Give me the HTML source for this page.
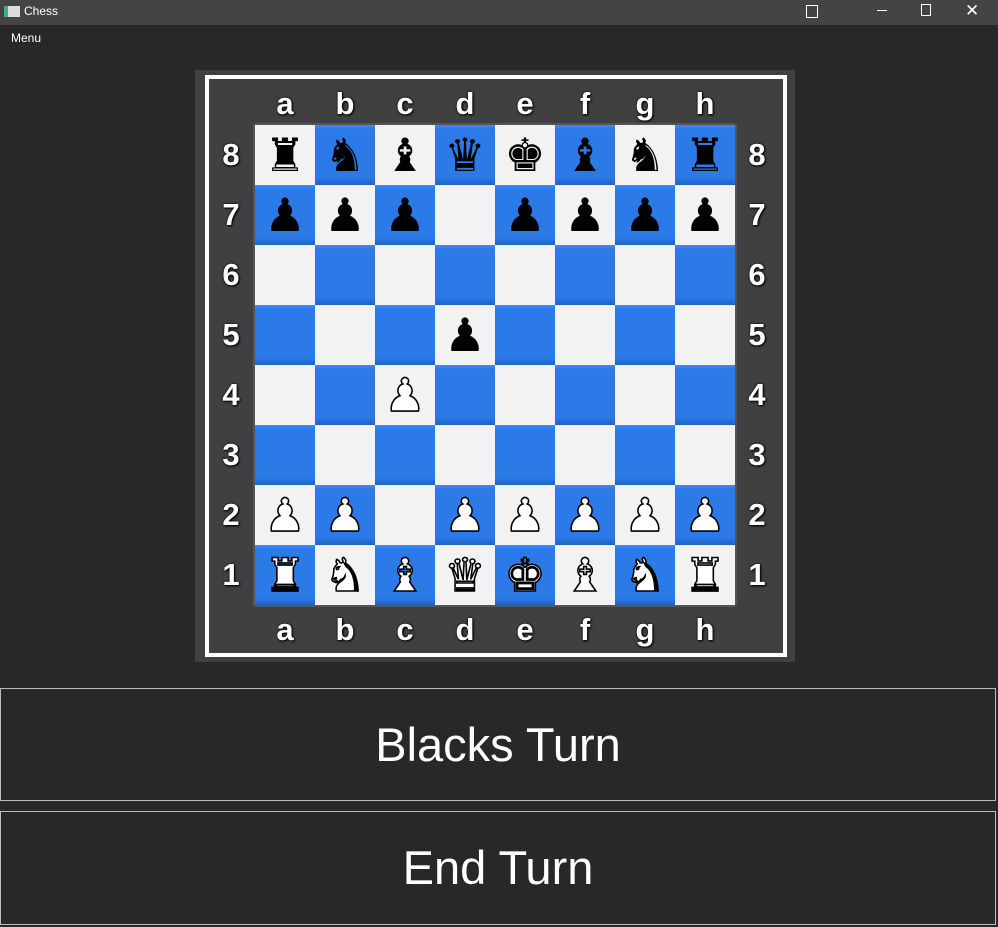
<!DOCTYPE html>
<html><head><style>
body{margin:0;width:998px;height:927px;background:#282828;font-family:"Liberation Sans","DejaVu Sans",sans-serif;overflow:hidden;position:relative}
.tb{position:absolute;left:0;top:0;width:998px;height:25px;background:#444}
.tb .t{position:absolute;left:24px;top:4px;color:#fff;font-size:12px}
.tb .ic{position:absolute;left:4px;top:6px;width:12px;height:11px;background:#ddd;border-left:4px solid #4a8}
.menu{position:absolute;left:11px;top:31px;color:#fff;font-size:12px}
.frame{position:absolute;left:195px;top:70px;width:600px;height:592px;background:#404040}
.border{position:absolute;left:205px;top:75px;width:574px;height:574px;border:4px solid #fff}
.board{position:absolute;left:253px;top:123px;width:484px;height:484px;background:#555;border-radius:3px}
.sq{position:absolute;width:60px;height:60px;text-align:center;font-family:"DejaVu Sans",sans-serif;font-size:46px;line-height:60px}
.l{background:#f2f2f2}
.d{background:linear-gradient(#3a8af5 0,#2b7ae8 8%,#2b7ae8 88%,#1f62c4 100%)}
.pc{position:absolute;left:0;top:0;width:60px;height:60px}
.wf{color:#fff;-webkit-text-stroke:1.6px #000}
.lab{position:absolute;color:#fff;font-weight:bold;font-size:31px;width:40px;text-align:center;text-shadow:0 0 2px #000,1px 1px 2px #000}
.btn{position:absolute;left:0;width:994px;border:1px solid #bbb;color:#fff;font-size:47px;text-align:center}
</style></head><body>
<div class="tb"><div class="ic"></div><div class="t">Chess</div>
<div style="position:absolute;left:806px;top:5px;width:10px;height:11px;border:1px solid #fff"></div>
<div style="position:absolute;left:877px;top:10px;width:10px;height:1px;background:#fff"></div>
<div style="position:absolute;left:921px;top:4px;width:8px;height:10px;border:1px solid #fff"></div>
<div style="position:absolute;left:965px;top:1px;color:#fff;font-size:17px">✕</div></div>
<div class="menu">Menu</div>
<div class="frame"></div><div class="border"></div>
<div class="board"></div>
<div id="sqs"></div>
<div class="btn" style="top:688px;height:111px;line-height:111px">Blacks Turn</div>
<div class="btn" style="top:811px;height:112px;line-height:112px">End Turn</div>
<script>
var pos=["rnbqkbnr","ppp.pppp","........","...p....","..P.....","........","PP.PPPPP","RNBQKBNR"];
var blk={r:'♜',n:'♞',b:'♝',q:'♛',k:'♚',p:'♟'};
var h='';var files='abcdefgh';
for(var r=0;r<8;r++){for(var c=0;c<8;c++){var x=255+c*60,y=125+r*60;var cls=(r+c)%2==0?'l':'d';var p=pos[r][c];var inner='';
if(p!='.'){if(p==p.toLowerCase()){inner='<div class="pc" style="color:#000">'+blk[p]+'</div>';}else{inner='<div class="pc wf">'+blk[p.toLowerCase()]+'</div>';}}
h+='<div class="sq '+cls+'" style="left:'+x+'px;top:'+y+'px">'+inner+'</div>';}}
for(var i=0;i<8;i++){var cx=265+i*60;h+='<div class="lab" style="left:'+cx+'px;top:86px">'+files[i]+'</div><div class="lab" style="left:'+cx+'px;top:612px">'+files[i]+'</div>';
var cy=137+i*60;h+='<div class="lab" style="left:211px;top:'+cy+'px">'+(8-i)+'</div><div class="lab" style="left:737px;top:'+cy+'px">'+(8-i)+'</div>';}
document.getElementById('sqs').innerHTML=h;
</script>
</body></html>
